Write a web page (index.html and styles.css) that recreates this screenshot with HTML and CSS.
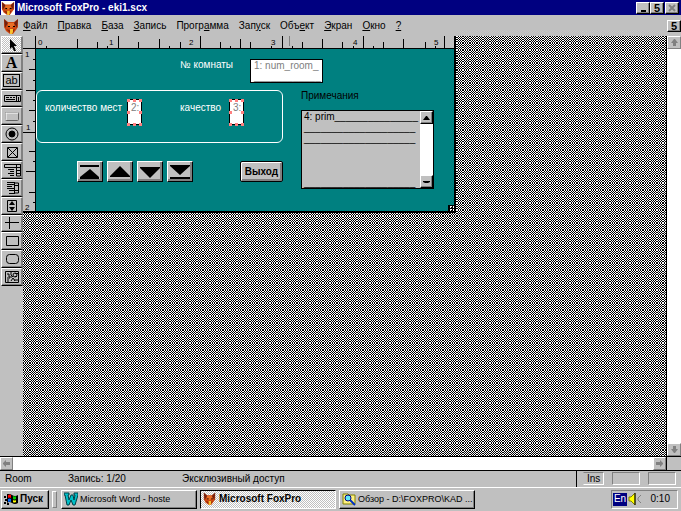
FILE: index.html
```
<!DOCTYPE html>
<html lang="ru">
  <head>
    <meta charset="UTF-8" />
    <meta name="viewport" content="width=device-width, initial-scale=1.0" />
    <title>Microsoft FoxPro - eki1.scx</title>
    <link rel="stylesheet" href="styles.css">
  </head>
  <body>
    <svg width="0" height="0" class="defs">
      <symbol id="fox" viewBox="0 0 16 16">
        <path d="M1 1l4 3h6l4-3v8l-2 3-3 4H7l-4-3-2-4z" fill="#d04810" />
        <path d="M1 1l4 4-3 5zM15 1l-4 4 3 5z" fill="#702010" />
        <path d="M5 5h6v3l-3 2-3-2z" fill="#e87028" />
        <path d="M3 11l4 1v3zM12 11l-2 4-1-3z" fill="#902808" />
        <path d="M7 11h3v3l-1 2H7z" fill="#f8c030" />
        <path d="M5 8h2v1H5zM10 8h2v1h-2z" fill="#000" />
      </symbol>
    </svg>

    <header class="titlebar">
      <svg class="title-icon"><rect width="14" height="14" fill="#fff" /><use href="#fox" width="14" height="14" /></svg>
      <h1>Microsoft FoxPro - eki1.scx</h1>
      <div class="window-buttons">
        <button class="win-btn" aria-label="Minimize"><svg width="8" height="8"><path d="M2 6h5v2H2z" /></svg></button>
        <button class="win-btn restore">5</button>
        <button class="win-btn close" aria-label="Close"><svg width="8" height="8"><path d="M1 1l6 6M7 1l-6 6" stroke="#808080" stroke-width="2" /></svg></button>
      </div>
    </header>

    <nav class="menubar">
      <svg class="menu-icon"><use href="#fox" width="16" height="18" /></svg>
      <a href="#"><u>Ф</u>айл</a>
      <a href="#"><u>П</u>равка</a>
      <a href="#"><u>Б</u>аза</a>
      <a href="#"><u>З</u>апись</a>
      <a href="#">Прогр<u>а</u>мма</a>
      <a href="#">Зап<u>у</u>ск</a>
      <a href="#">Объ<u>е</u>кт</a>
      <a href="#"><u>Э</u>кран</a>
      <a href="#"><u>О</u>кно</a>
      <a href="#"><u>?</u></a>
      <button class="win-btn restore">5</button>
    </nav>

    <main class="workspace">
      <div class="toolbox">
        <button class="tool active" aria-label="Select"><svg viewBox="0 0 18 14"><path d="M7 1v10l2-2 2 4h2l-2-5h3z" fill="#000" /></svg></button>
        <button class="tool letter">A</button>
        <button class="tool" aria-label="Field"><span class="tool-field">ab</span></button>
        <button class="tool" aria-label="Push button"><svg viewBox="0 0 18 14"><path d="M1.500 4.500h16v6h-16zM13.500 4v6M3 6.500h3M7 6.500h2M10 6.500h2M3 8.500h9M15.500 6v4" /></svg></button>
        <button class="tool" aria-label="Button"><svg viewBox="0 0 18 14"><rect x="2.500" y="3.500" width="13" height="8" rx="1" stroke="#606060" /><path d="M3 11V4h12" stroke="#fff" /></svg></button>
        <button class="tool" aria-label="Radio button"><svg viewBox="0 0 18 14"><circle cx="9" cy="7" r="6" /><circle cx="9" cy="7" r="3" fill="#000" /></svg></button>
        <button class="tool" aria-label="Check box"><svg viewBox="0 0 18 14"><path d="M4.500 2.500h10v10h-10zM5 3l9 9M14 3l-9 9" /></svg></button>
        <button class="tool" aria-label="Popup"><svg viewBox="0 0 18 14"><path d="M1.500 1.500h16v3h-16zM13.500 1v12h4V1M5 6.500h6M7 8.500h4M5 10.500h6M7 12.500h4M14 7.500h3M14 10.500h3" /></svg></button>
        <button class="tool" aria-label="List"><svg viewBox="0 0 18 14"><path d="M4 1.500h8M4 3.500h7M4 5.500h5M4 7.500h7M6 9.500h5M6 12.500h6M11.500 1v11h4V2h-4M12 4.500h3M12 9.500h3" /></svg></button>
        <button class="tool" aria-label="Spinner"><svg viewBox="0 0 18 14"><path d="M4.500 1.500h9v11h-9z" /><path d="M9 2l3 4H6zM9 12l3-4H6z" fill="#000" stroke="none" /></svg></button>
        <button class="tool" aria-label="Line"><svg viewBox="0 0 18 14"><path d="M2 6.500h14M6.500 1v12" /></svg></button>
        <button class="tool" aria-label="Box"><svg viewBox="0 0 18 14"><path d="M3.500 2.500h12v9h-12z" /></svg></button>
        <button class="tool" aria-label="Rounded box"><svg viewBox="0 0 18 14"><rect x="3.500" y="2.500" width="12" height="9" rx="3" /></svg></button>
        <button class="tool" aria-label="Picture"><svg viewBox="0 0 18 14"><path d="M2.500 1.500h13v11h-13zM4 4h2v3h3M5 9v3M8 2v3l2 2M12 3.500h3M12 6.500h2M8 11l2-3 2 3M11 10h4M4 8h3" /><circle cx="12" cy="5" r="2" /></svg></button>
      </div>

      <div class="desk">
        <section class="designer">
          <svg class="ruler-top">
            <path d="M12.500 0v12M95.500 0v12M177.500 0v12M259.500 0v12M340.500 0v12M421.500 0v12M54.500 3v9M136.500 3v9M217.500 3v9M299.500 3v9M380.500 3v9M74.500 6v6M115.500 6v6M157.500 6v6M197.500 6v6M227.500 6v6M279.500 6v6M319.500 6v6M360.500 6v6M402.500 6v6M23.500 10v2M84.500 10v2M146.500 10v2M207.500 10v2M248.500 10v2M269.500 10v2M330.500 10v2M350.500 10v2M412.500 10v2M0 12.500h433" />
            <path d="M266.500 0v10" stroke="#808080" />
            <text x="15" y="9">0</text><text x="86" y="9">1</text><text x="166" y="9">2</text><text x="248" y="9">3</text><text x="330" y="9">4</text><text x="411" y="9">5</text>
          </svg>
          <svg class="ruler-left">
            <path d="M12.500 0v163M10 10.500h2M6 20.500h6M10 31.500h2M3 41.500h9M10 51.500h2M6 61.500h6M10 72.500h2M0 83.500h12M6 102.500h6M10 112.500h2M3 122.500h9M6 143.500h6M10 153.500h2" />
            <text x="2" y="8">1</text><text x="3" y="81">1</text><text x="2" y="161">2</text>
          </svg>

          <div class="form">
            <div class="room-row">
              <label for="room">№ комнаты</label>
              <textarea id="room" rows="2" readonly>1: num_room_
____________</textarea>
            </div>

            <div class="left-side">
              <div class="group">
                <label for="places" class="places-label">количество мест</label>
                <div class="selected-field">
                  <input id="places" type="text" value="2:" readonly />
                  <svg class="handles"><path d="M0 0h3v3H0zM6 0h3v3H6zM12 0h3v3h-3zM0 12h3v3H0zM12 12h3v3h-3zM0 24h3v3H0zM6 24h3v3H6zM12 24h3v3h-3z" /></svg>
                </div>
                <label for="quality" class="quality-label">качество</label>
                <div class="selected-field">
                  <input id="quality" type="text" value="3:" readonly />
                  <svg class="handles"><path d="M0 0h3v3H0zM6 0h3v3H6zM12 0h3v3h-3zM0 12h3v3H0zM12 12h3v3h-3zM0 24h3v3H0zM6 24h3v3H6zM12 24h3v3h-3z" /></svg>
                </div>
              </div>
              <div class="actions">
                <button class="nav-btn" aria-label="First"><svg viewBox="0 0 22 16"><path d="M1 1h19v2H1zM11 5l9 8v2H1v-2z" /></svg></button>
                <button class="nav-btn" aria-label="Previous"><svg viewBox="0 0 22 16"><path d="M11 2l10 10v1H1v-1z" /></svg></button>
                <button class="nav-btn" aria-label="Next"><svg viewBox="0 0 22 16"><path d="M1 3h20v1L11 14 1 4z" /></svg></button>
                <button class="nav-btn" aria-label="Last"><svg viewBox="0 0 22 16"><path d="M1 1h20v1l-10 9L1 2zM1 13h20v2H1z" /></svg></button>
                <button class="exit-btn">Выход</button>
              </div>
            </div>

            <div class="notes">
              <label for="notes">Примечания</label>
              <div class="memo">
                <textarea id="notes" readonly>4: prim_______________
____________________
____________________



____________________</textarea>
                <div class="memo-scroll">
                  <button aria-label="Up"><svg width="7" height="4"><path d="M0 4l3-4h1l3 4z" /></svg></button>
                  <button aria-label="Down"><svg width="7" height="4"><path d="M0 1h7v1L5 3H2L0 2z" /></svg></button>
                </div>
              </div>
            </div>
            <span class="size-grip"></span>
          </div>
        </section>
      </div>

      <div class="scroll-v">
        <button aria-label="Up"><svg width="9" height="9"><path d="M4 1h1l3 4H6v3H3V5H1z" /></svg></button>
        <button aria-label="Down"><svg width="9" height="9"><path d="M4 8h1l3-4H6V1H3v3H1z" /></svg></button>
      </div>
    </main>

    <div class="scroll-row">
      <div class="scroll-h">
        <button aria-label="Left"><svg width="9" height="9"><path d="M1 4v1l3 3V6h4V3H4V1z" /></svg></button>
        <button aria-label="Right"><svg width="9" height="9"><path d="M8 4v1L5 8V6H1V3h4V1z" /></svg></button>
      </div>
    </div>

    <div class="statusbar">
      <span class="status-file">Room</span>
      <span class="status-record">Запись: 1/20</span>
      <span class="status-mode">Эксклюзивный доступ</span>
      <div class="indicators">
        <span class="ins">Ins</span>
        <span></span>
        <span></span>
      </div>
    </div>

    <footer class="taskbar">
      <button class="start">
        <svg width="14" height="12"><path d="M0 3h2v2H0zM1 6h2v2H1zM0 9h2v2H0zM3 1h2v2H3zM3 10h2v2H3z" /><path d="M3 2q2-2 5 0v8q-3-2-5 0zM8 2q3 2 6 0v8q-3 2-6 0z" /><path d="M4 2q2-1 3 0v3q-2-1-3 0z" fill="#f00" /><path d="M9 3q2 1 3 0v3q-2 1-3 0z" fill="#0c0" /><path d="M4 6q2-1 3 0v3q-2-1-3 0z" fill="#06f" /><path d="M9 7q2 1 3 0v2q-2 1-3 0z" fill="#ff0" /></svg>
        Пуск
      </button>
      <span class="groove"></span>
      <button class="task">
        <svg width="14" height="14"><path d="M0 1h5v2H4l1 5 2-5h2l1 5 1-5h-1V1h4v2l-3 10H9L7 8l-2 5H3L1 3H0z" fill="#00c0c8" stroke="#004048" /></svg>
        Microsoft Word - hoste
      </button>
      <button class="task current">
        <svg width="14" height="14"><use href="#fox" width="13" height="13" /></svg>
        Microsoft FoxPro
      </button>
      <button class="task">
        <svg width="14" height="14"><path d="M1 2h5l1 1h6v9H1z" fill="#fff080" stroke="#808000" /><circle cx="6" cy="6" r="3" fill="#60e8f8" stroke="#000080" /><path d="M8 8l5 5" stroke="#0030c0" stroke-width="2" /></svg>
        Обзор - D:\FOXPRO\KAD ...
      </button>
      <div class="tray">
        <span class="lang">En</span>
        <svg width="14" height="14"><path d="M1 5h2l4-4v12L3 9H1z" fill="#ff0" stroke="#808000" /><path d="M7 1v12" stroke="#000" /><path d="M13 3l-3 3v2l3 3" fill="none" stroke="#808080" /></svg>
        <time>0:10</time>
      </div>
    </footer>
  </body>
</html>
```
FILE: styles.css
```
* {
  box-sizing: border-box;
}

body {
  margin: 0;
  height: 100vh;
  display: flex;
  flex-direction: column;
  overflow: hidden;
  background-color: #c0c0c0;
  color: #000;
  font: 10px/12px "Liberation Sans", Arial, sans-serif;
}

button,
input,
textarea {
  font: inherit;
  color: inherit;
  margin: 0;
  padding: 0;
  border: 0;
  border-radius: 0;
  outline: none;
}

button {
  display: flex;
  align-items: center;
  justify-content: center;
  background-color: #c0c0c0;
  color: #000;
}

textarea {
  display: block;
  resize: none;
  overflow: hidden;
}

svg {
  display: block;
  flex: none;
}

.defs {
  position: absolute;
}

/* title and menu */
.titlebar {
  display: flex;
  align-items: center;
  gap: 2px;
  height: 15px;
  flex: none;
  padding: 0 1px;
  background-color: #000080;
  color: #fff;
}

.title-icon {
  width: 14px;
  height: 14px;
}

.titlebar h1 {
  flex: 1;
  margin: 0;
  font-size: 10px;
  font-weight: bold;
}

.window-buttons {
  display: flex;
  padding-right: 1px;
}

.win-btn {
  width: 14px;
  height: 12px;
  border: 1px solid #000;
  border-top-color: #fff;
  border-left-color: #fff;
  box-shadow: inset -1px -1px #808080;
}

.win-btn.close {
  margin-left: 1px;
}

.restore {
  font-size: 11px;
  font-weight: bold;
}

.menubar {
  display: flex;
  align-items: center;
  gap: 10px;
  height: 21px;
  flex: none;
  padding-left: 3px;
}

.menubar a {
  color: #000;
  text-decoration: none;
}

.menu-icon {
  width: 16px;
  height: 18px;
  margin-right: -6px;
}

.menubar .win-btn {
  margin-left: auto;
}

/* work area */
.workspace {
  display: flex;
  flex: 1;
  min-height: 0;
}

.toolbox {
  display: grid;
  grid-template-rows: repeat(14, 1fr);
  width: 23px;
  height: 250px;
  padding-left: 1px;
  flex: none;
}

.tool {
  border-top: 1px solid #fff;
  border-left: 1px solid #fff;
  border-right: 2px solid #808080;
  border-bottom: 1px solid #000;
  box-shadow: inset 0 -1px #808080;
  min-height: 0;
}

.tool svg {
  width: 18px;
  height: 14px;
  fill: none;
  stroke: #000;
}

.tool.active svg {
  stroke: none;
}

.tool.active,
.task.current {
  background: conic-gradient(#fff 25%, #c0c0c0 0 50%, #fff 0 75%, #c0c0c0 0) 0 0 / 2px 2px;
}

.tool.letter {
  font: bold 16px/14px "Liberation Serif", serif;
}

.tool-field {
  width: 17px;
  height: 13px;
  border: 1px solid #000;
  line-height: 11px;
  font-size: 11px;
}

/* checkerboard whose phase flips every few pixels */
.desk {
  flex: 1;
  min-width: 0;
  border-right: 1px solid #000;
  background-image:
    linear-gradient(90deg, #fff 0 7px, #000 0 14px, #fff 0 20px, #000 0 27px, #fff 0 34px, #000 0 40px),
    linear-gradient(#fff 0 7px, #000 0 14px, #fff 0 20px, #000 0 27px, #fff 0 34px, #000 0 40px),
    conic-gradient(#fff 25%, #000 0 50%, #fff 0 75%, #000 0);
  background-size: 40px 40px, 40px 40px, 2px 2px;
  background-blend-mode: difference, difference, normal;
}

.designer {
  display: grid;
  grid-template: 13px auto / 13px 1fr;
  width: 433px;
  border-right: 2px solid #000;
  border-bottom: 2px solid #000;
  background-color: #c0c0c0;
}

.ruler-top,
.ruler-left {
  width: 100%;
  height: 100%;
  fill: none;
  stroke: #000;
}

.ruler-top {
  grid-column: 1 / 3;
}

.designer text {
  font-size: 8px;
  fill: #000;
  stroke: none;
}

.form {
  position: relative;
  display: grid;
  grid-template: 41px auto / 247px 1fr;
  column-gap: 18px;
  height: 162px;
  background-color: #008080;
  color: #fff;
}

.room-row {
  grid-column: 1 / 3;
  display: flex;
  gap: 20px;
  padding: 10px 0 0 144px;
}

.room-row label {
  width: 50px;
  white-space: nowrap;
}

.room-row textarea {
  width: 73px;
  height: 24px;
  padding: 0 3px;
  border: 1px solid #000;
  background-color: #fff;
  color: #808080;
  line-height: 11px;
  white-space: pre;
}

.group {
  display: flex;
  height: 53px;
  padding: 8px 0 0 8px;
  border: 1px solid #fff;
  border-radius: 6px;
}

.group label {
  padding-top: 3px;
  white-space: nowrap;
}

.places-label {
  width: 82px;
}

.quality-label {
  width: 49px;
  margin-left: 38px;
}

.selected-field {
  position: relative;
  width: 15px;
  height: 27px;
}

.selected-field input {
  display: block;
  width: 15px;
  height: 26px;
  padding: 0 0 10px 3px;
  border: 1px solid #000;
  background-color: #fff;
  color: #808080;
}

.handles {
  position: absolute;
  top: 0;
  left: 0;
  width: 15px;
  height: 27px;
  fill: #ff8080;
}

.actions {
  display: flex;
  gap: 4px;
  padding: 18px 0 0 41px;
}

.nav-btn,
.exit-btn {
  height: 21px;
  border: 1px solid #000;
  border-top-color: #fff;
  border-left-color: #fff;
  box-shadow: inset -2px -2px #808080;
}

.nav-btn {
  width: 26px;
}

.nav-btn svg {
  width: 22px;
  height: 16px;
}

.exit-btn {
  width: 43px;
  margin-left: 43px;
  border-color: #000;
  border-radius: 2px;
  box-shadow: inset 1px 1px #fff, inset -2px -2px #808080;
  font-weight: bold;
}

.notes {
  color: #000;
}

.notes label {
  display: block;
  height: 20px;
}

.memo {
  display: flex;
  width: 133px;
  height: 79px;
  border: 1px solid #000;
  background-color: #c0c0c0;
}

.memo textarea {
  flex: 1;
  min-width: 0;
  height: 100%;
  padding: 0 2px;
  background-color: transparent;
  line-height: 11px;
  white-space: pre;
}

.memo-scroll {
  display: flex;
  flex-direction: column;
  justify-content: space-between;
  width: 13px;
  background-color: #fff;
}

.memo-scroll button {
  height: 13px;
  border: 1px solid #000;
  border-top-color: #fff;
  border-left-color: #fff;
  box-shadow: inset -1px -1px #808080;
}

.size-grip {
  position: absolute;
  right: -1px;
  bottom: -1px;
  width: 7px;
  height: 7px;
  border: 1px solid #000;
  background: conic-gradient(#fff 25%, #000 0) 0 0 / 3px 3px;
}

/* window scroll bars */
.scroll-v,
.scroll-h {
  display: flex;
  justify-content: space-between;
  background-color: #fff;
}

.scroll-v {
  flex: none;
  flex-direction: column;
  width: 14px;
}

.scroll-row {
  flex: none;
  height: 15px;
  padding-right: 14px;
  border-top: 1px solid #000;
  border-bottom: 1px solid #000;
}

.scroll-h {
  border-right: 1px solid #000;
}

.scroll-v button,
.scroll-h button {
  width: 13px;
  height: 13px;
  border: 1px solid #808080;
  border-top-color: #fff;
  border-left-color: #fff;
  fill: #808080;
}

.scroll-v button {
  width: 14px;
}

/* status bar */
.statusbar {
  display: flex;
  align-items: center;
  height: 16px;
  flex: none;
  padding-left: 5px;
}

.status-file {
  width: 63px;
}

.status-record {
  width: 114px;
}

.status-mode {
  flex: 1;
}

.indicators {
  display: flex;
  gap: 8px;
  height: 100%;
  padding: 1px 5px 2px 6px;
  border-left: 1px solid #000;
}

.indicators span {
  width: 28px;
  border: 1px solid #fff;
  border-top-color: #808080;
  border-left-color: #808080;
}

.indicators .ins {
  width: 21px;
  padding-left: 3px;
  border-left-color: #c0c0c0;
}

/* task bar */
.taskbar {
  display: flex;
  align-items: center;
  gap: 3px;
  height: 24px;
  flex: none;
  padding: 1px 3px 2px 1px;
  border-top: 1px solid #fff;
}

.start,
.task {
  height: 19px;
  justify-content: flex-start;
  gap: 2px;
  padding: 0 2px;
  border: 1px solid #000;
  border-top-color: #fff;
  border-left-color: #fff;
  box-shadow: inset -1px -1px #808080;
  white-space: nowrap;
}

.start {
  width: 48px;
  font-weight: bold;
}

.groove {
  width: 5px;
  height: 17px;
  border: 1px solid #808080;
  border-color: #fff #808080 #808080 #fff;
  margin-right: 1px;
}

.task {
  width: 136px;
  font-size: 9px;
}

.task.current {
  border-color: #000 #fff #fff #000;
  box-shadow: none;
  font-size: 10px;
  font-weight: bold;
}

.tray {
  display: flex;
  align-items: center;
  gap: 1px;
  width: 67px;
  height: 19px;
  margin-left: auto;
  padding: 0 7px 0 1px;
  border: 1px solid #fff;
  border-top-color: #808080;
  border-left-color: #808080;
}

.tray time {
  margin-left: auto;
}

.lang {
  width: 14px;
  height: 13px;
  background-color: #000080;
  color: #fff;
  text-align: center;
}
```
